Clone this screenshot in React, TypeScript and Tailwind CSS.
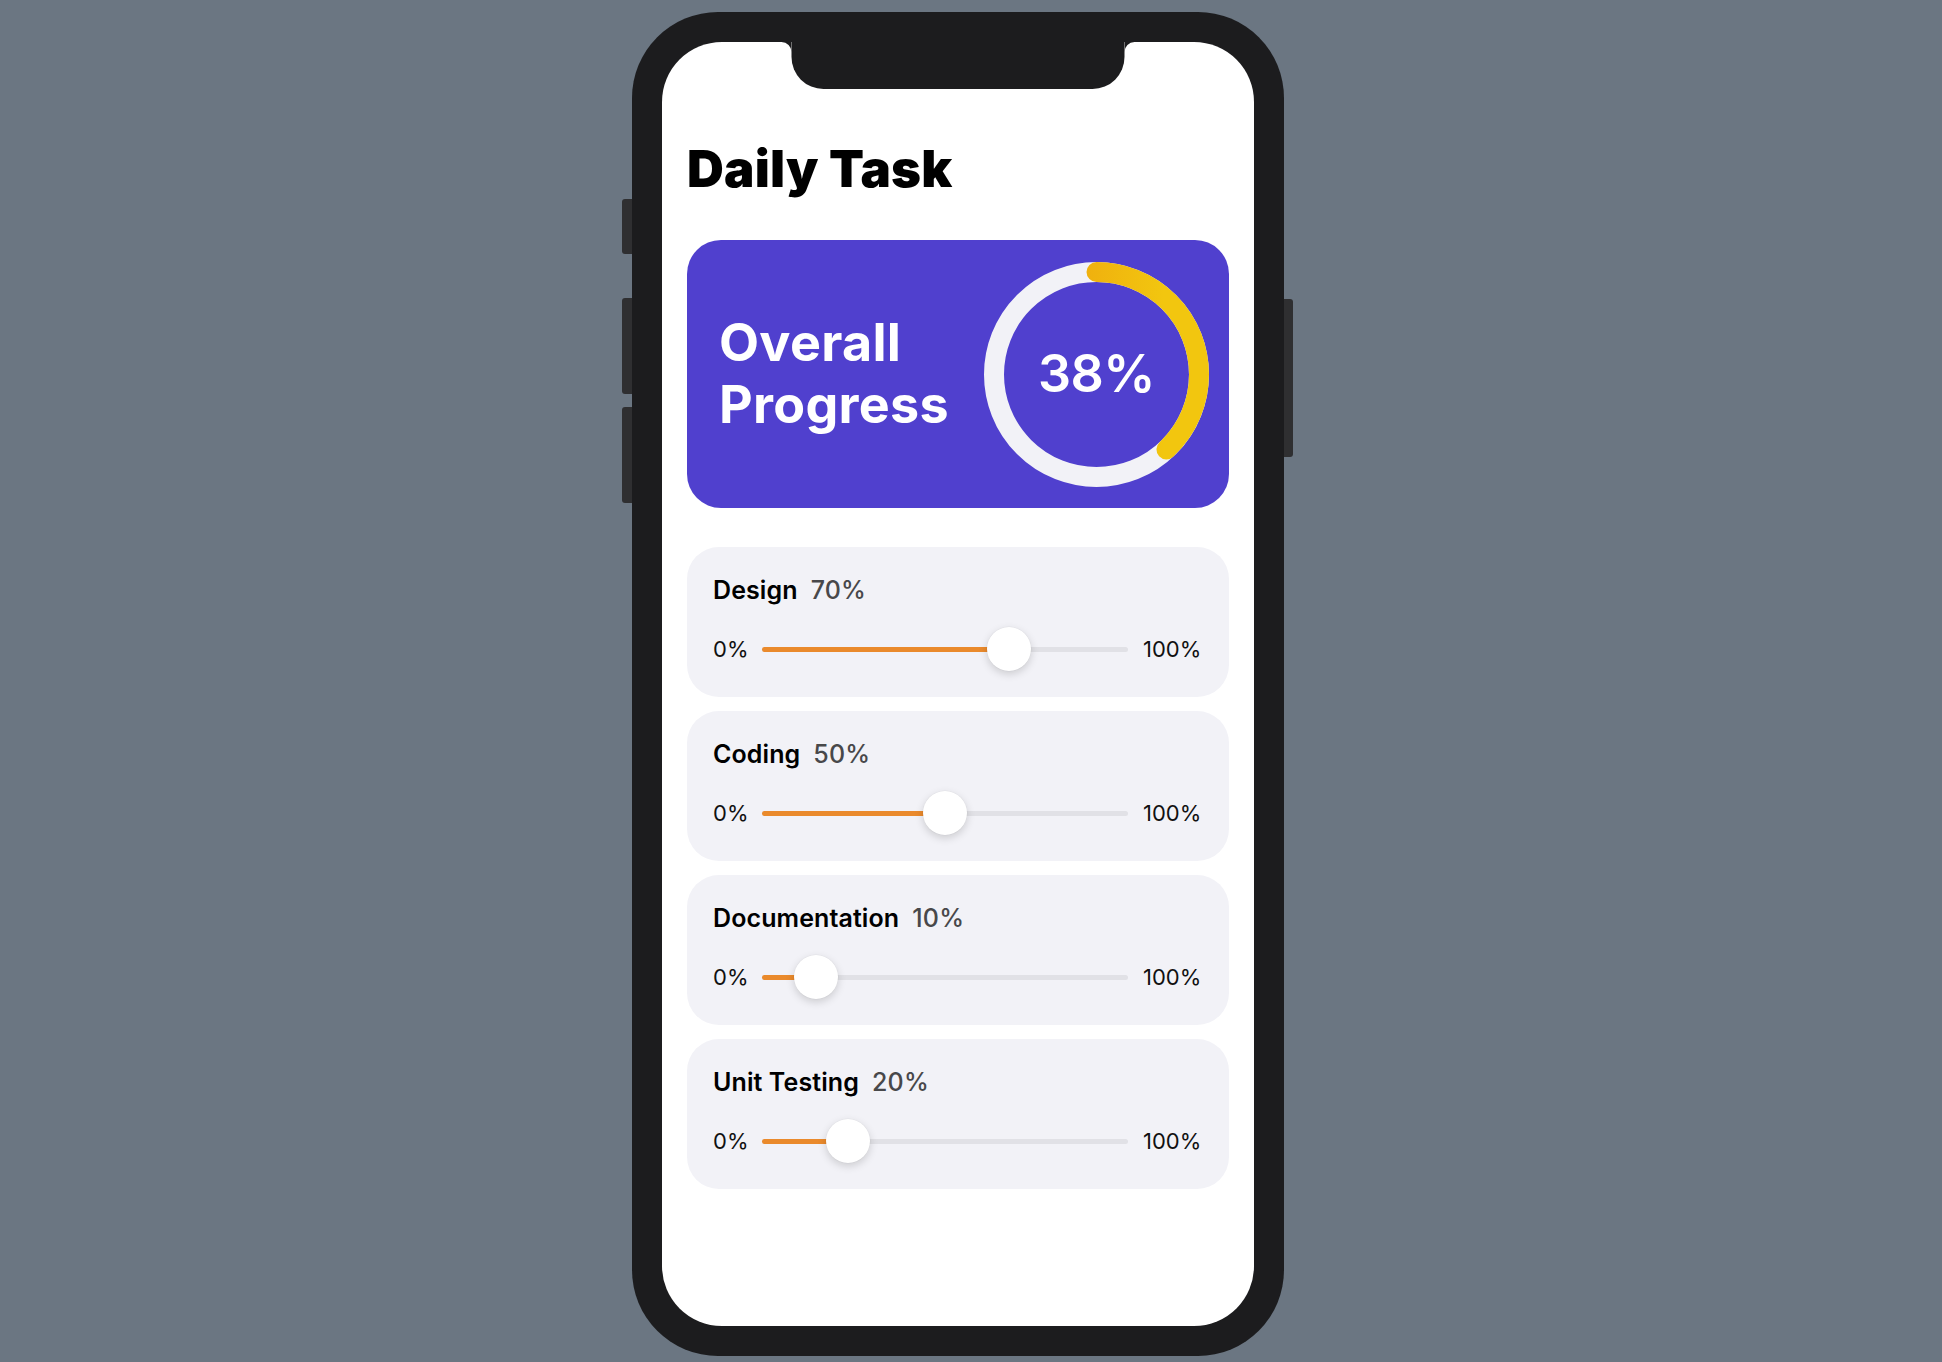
import React from "react";

type Task = { name: string; value: number };

const tasks: Task[] = [
  { name: "Design", value: 70 },
  { name: "Coding", value: 50 },
  { name: "Documentation", value: 10 },
  { name: "Unit Testing", value: 20 },
];

const TRACK_W = 366;
const THUMB = 44;

function ProgressRing({ percent }: { percent: number }) {
  const size = 225;
  const stroke = 20;
  const r = (size - stroke) / 2;
  const c = 2 * Math.PI * r;
  return (
    <div className="grid place-items-center">
      <svg
        width={size}
        height={size}
        viewBox={`0 0 ${size} ${size}`}
        className="col-start-1 row-start-1"
      >
        <defs>
          <linearGradient id="ringFill" x1="0" y1="0" x2="0" y2={size} gradientUnits="userSpaceOnUse">
            <stop offset="0" stopColor="#EE9E0E" />
            <stop offset="0.35" stopColor="#EFAA0E" />
            <stop offset="0.8" stopColor="#F2C60F" />
          </linearGradient>
        </defs>
        <circle cx={size / 2} cy={size / 2} r={r} fill="none" stroke="#F2F2F7" strokeWidth={stroke} />
        <circle
          cx={size / 2}
          cy={size / 2}
          r={r}
          fill="none"
          stroke="url(#ringFill)"
          strokeWidth={stroke}
          strokeLinecap="round"
          strokeDasharray={`${(c * percent) / 100} ${c}`}
          transform={`rotate(-90 ${size / 2} ${size / 2})`}
        />
      </svg>
      <span className="col-start-1 row-start-1 text-[52px] leading-none font-semibold text-white tracking-[-0.5px]">
        {percent}%
      </span>
    </div>
  );
}

function TaskSlider({ value }: { value: number }) {
  const center = THUMB / 2 + (value / 100) * (TRACK_W - THUMB);
  return (
    <div className="relative h-[44px] w-[366px] flex items-center">
      <div className="h-[5px] w-full rounded-full bg-[#E1E1E6]" />
      <div
        className="absolute left-0 top-[19.5px] h-[5px] rounded-full bg-[#EA8A2C]"
        style={{ width: center }}
      />
      <div
        className="absolute top-0 h-[44px] w-[44px] rounded-full bg-white shadow-[0_3px_8px_rgba(0,0,0,0.16),0_0_0_0.5px_rgba(0,0,0,0.04)]"
        style={{ left: center - THUMB / 2 }}
      />
    </div>
  );
}

function TaskCard({ task }: { task: Task }) {
  return (
    <div className="h-[150px] rounded-[32px] bg-[#F2F2F7] px-[26px] pt-[29px]">
      <div className="flex items-center gap-[13px] leading-[28px]">
        <span className="text-[25px] font-semibold text-black tracking-[0.1px]">{task.name}</span>
        <span className="text-[25px] font-medium text-[#48484A] tracking-[0.2px]">{task.value}%</span>
      </div>
      <div className="mt-[23px] flex items-center">
        <span className="w-[32px] text-[22px] text-[#111] mr-[17px]">0%</span>
        <TaskSlider value={task.value} />
        <span className="ml-[15px] text-[22px] text-[#111]">100%</span>
      </div>
    </div>
  );
}

export default function App() {
  const overall = 38;
  return (
    <div className="min-h-screen bg-[#6B7682] flex justify-center pr-[26px] pt-[12px] font-['Inter','Noto_Sans',sans-serif]">
      {/* phone body */}
      <div className="relative w-[652px] h-[1344px] rounded-[86px] bg-[#1C1C1E] p-[30px]">
        {/* side buttons */}
        <div className="absolute left-[-10px] top-[187px] h-[55px] w-[10px] rounded-l-[3px] bg-[#2F2F31]" />
        <div className="absolute left-[-10px] top-[286px] h-[96px] w-[10px] rounded-l-[3px] bg-[#2F2F31]" />
        <div className="absolute left-[-10px] top-[395px] h-[96px] w-[10px] rounded-l-[3px] bg-[#2F2F31]" />
        <div className="absolute right-[-9px] top-[287px] h-[158px] w-[9px] rounded-r-[3px] bg-[#2F2F31]" />

        {/* screen */}
        <div className="relative h-full w-full overflow-hidden rounded-[60px] bg-white">
          {/* notch with its small fillets where it meets the top edge */}
          <div className="absolute left-1/2 top-0 h-[47px] w-[333px] -translate-x-1/2 rounded-b-[32px] bg-[#1C1C1E]">
            <svg className="absolute left-[-10px] top-0" width="10" height="10" viewBox="0 0 10 10">
              <path d="M0 0 L10 0 L10 10 A10 10 0 0 0 0 0 Z" fill="#1C1C1E" />
            </svg>
            <svg className="absolute right-[-10px] top-0" width="10" height="10" viewBox="0 0 10 10">
              <path d="M10 0 L0 0 L0 10 A10 10 0 0 1 10 0 Z" fill="#1C1C1E" />
            </svg>
          </div>

          <div className="px-[25px] pt-[97px]">
            <h1 className="text-[51px] leading-[60px] font-black text-black tracking-[0.2px]">
              Daily Task
            </h1>

            <div className="mt-[41px] h-[268px] rounded-[34px] bg-[#5040CE] flex items-center justify-between pl-[32px] pr-[20px]">
              <div className="text-[52px] leading-[62px] font-bold text-white tracking-[0.3px]">
                <div>Overall</div>
                <div>Progress</div>
              </div>
              <ProgressRing percent={overall} />
            </div>

            <div className="mt-[39px] flex flex-col gap-[14px]">
              {tasks.map((t) => (
                <TaskCard key={t.name} task={t} />
              ))}
            </div>
          </div>
        </div>
      </div>
    </div>
  );
}
